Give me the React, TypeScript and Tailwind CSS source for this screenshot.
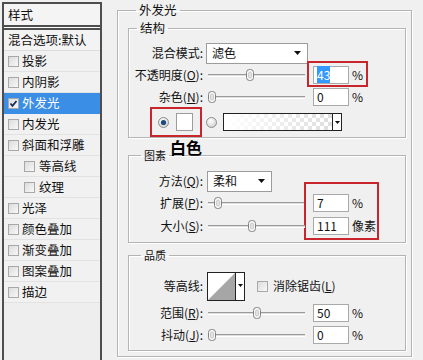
import type { ReactNode } from 'react'

const items = [
  { label: '投影' },
  { label: '内阴影' },
  { label: '外发光', checked: true },
  { label: '内发光' },
  { label: '斜面和浮雕' },
  { label: '等高线', sub: true },
  { label: '纹理', sub: true },
  { label: '光泽' },
  { label: '颜色叠加' },
  { label: '渐变叠加' },
  { label: '图案叠加' },
  { label: '描边' },
]

const Check = ({ checked }: { checked?: boolean }) => (
  <span className="flex size-[11px] shrink-0 items-center justify-center border border-[#a8a8a8] bg-gradient-to-br from-[#dcdcdc] to-[#f8f8f8]">
    {checked && (
      <svg width="9" height="9" viewBox="0 0 9 9">
        <path d="M1.5 4.5 L3.5 6.8 L7.5 2" fill="none" stroke="#1c2a55" strokeWidth="1.8" />
      </svg>
    )}
  </span>
)

const Sidebar = () => (
  <div className="mt-[2px] ml-[2px] flex w-[100px] shrink-0 flex-col border-x-2 border-t-2 border-[#4e4e4e] bg-[#eeeeee] text-[12.5px] text-[#111]">
    <div className="h-[23px] border-b-2 border-[#4e4e4e] bg-[#f4f4f4] pl-[4px] leading-[21px]">样式</div>
    <div className="h-[1px] bg-white" />
    <div className="h-[2px] bg-[#4e4e4e]" />
    <div className="flex h-[21px] items-center border-b border-[#dcdcdc] bg-[#f3f3f3] pl-[4px]">混合选项:默认</div>
    {items.map((it) => (
      <div
        key={it.label}
        className={`flex h-[21px] items-center gap-[3px] border-b ${
          it.checked ? 'border-[#3b8ee6] bg-[#3b8ee6] text-white' : 'border-[#e2e2e2] bg-[#f1f1f1]'
        } ${it.sub ? 'pl-[20px] gap-[4px]' : 'pl-[4px]'}`}
      >
        <Check checked={it.checked} />
        <span>{it.label}</span>
      </div>
    ))}
  </div>
)

const Group = ({
  title,
  small,
  className,
  children,
}: {
  title: string
  small?: boolean
  className?: string
  children: ReactNode
}) => (
  <fieldset className={`border border-[#b4b4b4] shadow-[inset_1px_1px_0_#fff,1px_1px_0_#fff] ${className ?? ''}`}>
    <legend className={`px-[3px] leading-[16px] ${small ? 'ml-[12px] text-[11px]' : 'ml-[8px] text-[12.5px]'}`}>
      {title}
    </legend>
    {children}
  </fieldset>
)

const Label = ({ children }: { children: ReactNode }) => (
  <span className="w-[74px] shrink-0 text-right text-[12px] whitespace-nowrap">{children}</span>
)

const Arrow = () => (
  <svg width="7" height="4" viewBox="0 0 7 4">
    <path d="M0 0 H7 L3.5 4 Z" fill="#111" />
  </svg>
)

const Select = ({ value, className }: { value: string; className: string }) => (
  <div
    className={`flex h-[21px] items-center justify-between border border-[#9c9c9c] bg-white pr-[6px] pl-[5px] text-[12px] ${className}`}
  >
    <span>{value}</span>
    <Arrow />
  </div>
)

const Slider = ({ value, max = 100 }: { value: number; max?: number }) => (
  <div className="relative ml-[5px] h-[14px] w-[97px] shrink-0">
    <div className="absolute top-[6px] right-0 left-0 h-[3px] border-t border-b border-t-[#9a9a9a] border-b-white bg-[#dedede]" />
    <svg
      className="absolute top-[1px]"
      style={{ left: Math.round((value / max) * 89) }}
      width="8"
      height="12"
      viewBox="0 0 8 12"
    >
      <rect x="0.5" y="0.5" width="7" height="11" rx="3" fill="#f7f7f7" stroke="#808080" />
      <rect x="2.5" y="3" width="3" height="6" rx="1.5" fill="#e2e2e2" stroke="#b5b5b5" strokeWidth="0.6" />
    </svg>
  </div>
)

const NumField = ({ children }: { children: ReactNode }) => (
  <div className="ml-[8px] h-[18px] w-[36px] shrink-0 border border-[#a9a9a9] bg-white pl-[3px] text-[12px] leading-[16px]">
    {children}
  </div>
)

const Unit = ({ children }: { children: ReactNode }) => <span className="ml-[3px] text-[12px]">{children}</span>

const Radio = ({ on }: { on?: boolean }) => (
  <svg width="11" height="11" viewBox="0 0 11 11" className="shrink-0">
    <defs>
      <radialGradient id={on ? 'rOn' : 'rOff'} cx="40%" cy="35%" r="70%">
        <stop offset="0" stopColor="#ffffff" />
        <stop offset="1" stopColor="#cfcfcf" />
      </radialGradient>
    </defs>
    <circle cx="5.5" cy="5.5" r="5" fill={`url(#${on ? 'rOn' : 'rOff'})`} stroke="#8c8c8c" />
    {on && <circle cx="5.5" cy="5.5" r="2.6" fill="#1d4a78" />}
  </svg>
)

const GradientBox = () => (
  <div className="ml-[6px] flex h-[18px] border border-[#222] bg-white">
    <svg width="108" height="16" viewBox="0 0 108 16">
      <defs>
        <pattern id="chk" width="8" height="8" patternUnits="userSpaceOnUse">
          <rect width="8" height="8" fill="#ffffff" />
          <rect width="4" height="4" fill="#dedede" />
          <rect x="4" y="4" width="4" height="4" fill="#dedede" />
        </pattern>
        <linearGradient id="fade" x1="0" x2="1">
          <stop offset="0" stopColor="#fff" stopOpacity="1" />
          <stop offset="1" stopColor="#fff" stopOpacity="0" />
        </linearGradient>
      </defs>
      <rect width="108" height="16" fill="url(#chk)" />
      <rect width="108" height="16" fill="url(#fade)" />
    </svg>
    <div className="flex w-[9px] items-center justify-center border-l border-[#222]">
      <svg width="5" height="3" viewBox="0 0 5 3">
        <path d="M0 0 H5 L2.5 3 Z" fill="#111" />
      </svg>
    </div>
  </div>
)

const Contour = () => (
  <svg width="38" height="29" viewBox="0 0 38 29" className="ml-[4px] shrink-0">
    <rect x="0.5" y="0.5" width="37" height="28" fill="#fff" stroke="#222" />
    <polygon points="1,28 28,1 28,28" fill="#a6a6a6" />
    <line x1="28.5" y1="0" x2="28.5" y2="29" stroke="#222" />
    <path d="M31 12 H36 L33.5 15 Z" fill="#111" />
  </svg>
)

export default function App() {
  return (
    <div className="flex h-[360px] w-[423px] overflow-hidden bg-[#f0f0f0] font-['Noto_Sans_CJK_SC',sans-serif] text-[#111]">
      <Sidebar />
      <div className="relative mt-[2px] ml-[15px] w-[295px] shrink-0">
        <Group title="外发光" className="h-[355px] pr-[5px] pb-[5px] pl-[10px]">
          <Group title="结构" className="mt-[2px]">
            <div className="mt-[6px] flex h-[22px] items-center">
              <Label>混合模式:</Label>
              <Select value="滤色" className="ml-[3px] w-[102px]" />
            </div>
            <div className="flex h-[22px] items-center">
              <Label>
                不透明度(<u>O</u>):
              </Label>
              <Slider value={43} />
              <div className="relative flex items-center">
                <NumField>
                  <span className="bg-[#3399ff] text-white">43</span>
                </NumField>
                <Unit>%</Unit>
                <div className="absolute -top-[5px] left-[2px] h-[26px] w-[61px] border-2 border-[#c9252c]" />
              </div>
            </div>
            <div className="flex h-[21px] items-center">
              <Label>
                杂色(<u>N</u>):
              </Label>
              <Slider value={0} />
              <NumField>0</NumField>
              <Unit>%</Unit>
            </div>
            <div className="flex h-[30px] items-center pl-[21px]">
              <div className="flex h-[30px] w-[52px] items-center border-2 border-[#c9252c] pl-[6px]">
                <Radio on />
                <div className="ml-[7px] h-[18px] w-[17px] border border-[#9c9c9c] bg-white" />
              </div>
              <div className="ml-[4px]">
                <Radio />
              </div>
              <GradientBox />
            </div>
          </Group>

          <Group title="图素" small className="mt-[9px] pb-[4px]">
            <div className="mt-[7px] flex h-[22px] items-center">
              <Label>
                方法(<u>Q</u>):
              </Label>
              <Select value="柔和" className="ml-[4px] w-[65px]" />
            </div>
            <div className="flex h-[22px] items-center">
              <Label>
                扩展(<u>P</u>):
              </Label>
              <Slider value={7} />
              <div className="relative flex items-center">
                <NumField>7</NumField>
                <Unit>%</Unit>
                <div className="absolute -top-[12px] left-[-1px] h-[58px] w-[75px] border-2 border-[#c9252c]" />
              </div>
            </div>
            <div className="flex h-[24px] items-center">
              <Label>
                大小(<u>S</u>):
              </Label>
              <Slider value={111} max={250} />
              <NumField>111</NumField>
              <Unit>像素</Unit>
            </div>
          </Group>

          <Group title="品质" small className="mt-[4px] pb-[5px]">
            <div className="mt-[8px] flex h-[30px] items-center">
              <Label>等高线:</Label>
              <Contour />
              <div className="ml-[12px]">
                <Check />
              </div>
              <span className="ml-[5px] text-[12px]">
                消除锯齿(<u>L</u>)
              </span>
            </div>
            <div className="flex h-[24px] items-center">
              <Label>
                范围(<u>R</u>):
              </Label>
              <Slider value={50} />
              <NumField>50</NumField>
              <Unit>%</Unit>
            </div>
            <div className="flex h-[20px] items-center">
              <Label>
                抖动(<u>J</u>):
              </Label>
              <Slider value={0} />
              <NumField>0</NumField>
              <Unit>%</Unit>
            </div>
          </Group>
        </Group>
        <span className="absolute top-[135px] left-[53px] text-[16px] leading-[20px] font-bold text-black">白色</span>
      </div>
    </div>
  )
}
